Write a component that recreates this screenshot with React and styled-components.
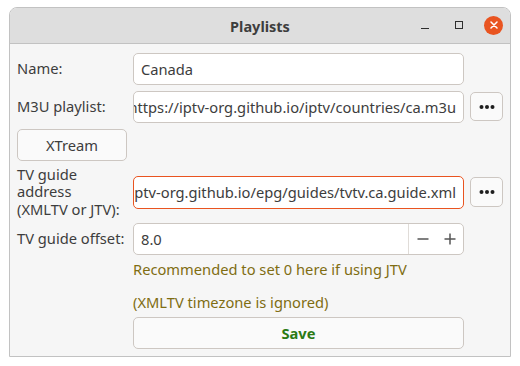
import React from 'react';
import styled, { createGlobalStyle } from 'styled-components';

const COLORS = {
  text: '#3d3d3d',
  border: '#cdc7c2',
  windowBorder: '#c2c2c2',
  titlebar: '#dedede',
  surface: '#f6f6f6',
  accent: '#e95420',
  hint: '#7f6d12',
  save: '#2b7a14',
};

const GlobalStyle = createGlobalStyle`
  body {
    margin: 0;
    background: #ffffff;
    font-family: "Noto Sans", "DejaVu Sans", sans-serif;
    color: ${COLORS.text};
  }
`;

const Window = styled.div`
  margin: 7px 0 0 9px;
  width: 502px;
  height: 350px;
  box-sizing: border-box;
  border: 1px solid ${COLORS.windowBorder};
  border-radius: 8px 8px 0 0;
  display: flex;
  flex-direction: column;
  background: ${COLORS.surface};
  overflow: hidden;
`;

const TitleBar = styled.header`
  height: 35px;
  flex-shrink: 0;
  background: ${COLORS.titlebar};
  border-bottom: 1px solid ${COLORS.windowBorder};
  display: grid;
  grid-template-columns: 1fr auto 1fr;
  align-items: center;
`;

const Title = styled.h1`
  grid-column: 2;
  margin: 0;
  font-size: 14.5px;
  font-weight: 700;
  color: ${COLORS.text};
`;

const Controls = styled.div`
  grid-column: 3;
  justify-self: end;
  display: flex;
  height: 100%;
`;

const ControlBox = styled.div`
  width: 34px;
  display: flex;
  align-items: center;
  justify-content: center;
`;

const MinimizeGlyph = styled.span`
  width: 8px;
  height: 1px;
  margin-top: 5px;
  background: #2e2e2e;
`;

const MaximizeGlyph = styled.span`
  width: 8px;
  height: 8px;
  box-sizing: border-box;
  border: 1px solid #2e2e2e;
  margin-top: -1px;
`;

const CloseGlyph = styled.span`
  width: 19px;
  height: 19px;
  margin-left: 1px;
  margin-top: -1px;
  border-radius: 50%;
  background: ${COLORS.accent};
  display: flex;
  align-items: center;
  justify-content: center;
`;

const Form = styled.div`
  padding: 9px 7px 7px;
  display: grid;
  grid-template-columns: 110px 331px 33px;
  grid-template-rows: 32px 32px 32px 50px 32px 50px 32px;
  column-gap: 6px;
  row-gap: 6px;
  font-size: 14.7px;
`;

const Label = styled.div`
  grid-column: 1;
  align-self: center;
  line-height: 17.5px;
  white-space: nowrap;
  color: ${COLORS.text};
`;

const Field = styled.div`
  grid-column: 2;
  box-sizing: border-box;
  display: flex;
  align-items: center;
  justify-content: ${(p) => (p.$scrolled ? 'flex-end' : 'flex-start')};
  padding: 0 7px 0 7px;
  background: #ffffff;
  border: 1px solid ${(p) => (p.$focused ? COLORS.accent : COLORS.border)};
  border-radius: 5px;
  overflow: hidden;
  white-space: nowrap;
  color: ${COLORS.text};
`;

const FieldText = styled.span`
  flex-shrink: 0;
`;

const Button = styled.button`
  box-sizing: border-box;
  border: 1px solid ${COLORS.border};
  border-radius: 5px;
  background: #fafafa;
  font-family: inherit;
  font-size: 14.7px;
  color: ${COLORS.text};
  padding: 0;
  display: flex;
  align-items: center;
  justify-content: center;
`;

const DotsButton = styled(Button)`
  grid-column: 3;
  margin: 1px 0 2px;
`;

const XtreamButton = styled(Button)`
  grid-column: 1;
`;

const SaveButton = styled(Button)`
  grid-column: 2;
  font-weight: 700;
  color: ${COLORS.save};
`;

const SpinField = styled.div`
  grid-column: 2;
  box-sizing: border-box;
  display: flex;
  background: #ffffff;
  border: 1px solid ${COLORS.border};
  border-radius: 5px;
  overflow: hidden;
  color: ${COLORS.text};
`;

const SpinValue = styled.div`
  flex: 1;
  display: flex;
  align-items: center;
  padding-left: 7px;
  border-right: 1px solid #e0dcd8;
`;

const SpinButton = styled.div`
  width: 27px;
  display: flex;
  align-items: center;
  justify-content: center;
`;

const Hint = styled.div`
  grid-column: 2;
  line-height: 16.5px;
  color: ${COLORS.hint};
`;

const Dots = () => (
  <svg width="16" height="6" viewBox="0 0 16 6">
    <circle cx="2.5" cy="3" r="2" fill="#1e1e1e" />
    <circle cx="8" cy="3" r="2" fill="#1e1e1e" />
    <circle cx="13.5" cy="3" r="2" fill="#1e1e1e" />
  </svg>
);

const Minus = () => (
  <svg width="12" height="12" viewBox="0 0 12 12">
    <rect x="0.5" y="5.25" width="11" height="1.5" fill="#555" />
  </svg>
);

const Plus = () => (
  <svg width="12" height="12" viewBox="0 0 12 12">
    <rect x="0.5" y="5.25" width="11" height="1.5" fill="#555" />
    <rect x="5.25" y="0.5" width="1.5" height="11" fill="#555" />
  </svg>
);

const Cross = () => (
  <svg width="8" height="8" viewBox="0 0 8 8">
    <path d="M1 1 L7 7 M7 1 L1 7" stroke="#ffffff" strokeWidth="1.5" strokeLinecap="round" />
  </svg>
);

export default function App() {
  return (
    <>
      <GlobalStyle />
      <Window>
        <TitleBar>
          <Title>Playlists</Title>
          <Controls>
            <ControlBox><MinimizeGlyph /></ControlBox>
            <ControlBox><MaximizeGlyph /></ControlBox>
            <ControlBox><CloseGlyph><Cross /></CloseGlyph></ControlBox>
          </Controls>
        </TitleBar>
        <Form>
          <Label>Name:</Label>
          <Field><FieldText>Canada</FieldText></Field>

          <Label>M3U playlist:</Label>
          <Field $scrolled>
            <FieldText>https://iptv-org.github.io/iptv/countries/ca.m3u</FieldText>
          </Field>
          <DotsButton><Dots /></DotsButton>

          <XtreamButton>XTream</XtreamButton>

          <Label>TV guide<br />address<br />(XMLTV or JTV):</Label>
          <Field $scrolled $focused style={{ height: 33, alignSelf: 'center' }}>
            <FieldText>https://iptv-org.github.io/epg/guides/tvtv.ca.guide.xml</FieldText>
          </Field>
          <DotsButton style={{ height: 30, alignSelf: 'center', margin: 0 }}><Dots /></DotsButton>

          <Label>TV guide offset:</Label>
          <SpinField>
            <SpinValue>8.0</SpinValue>
            <SpinButton><Minus /></SpinButton>
            <SpinButton><Plus /></SpinButton>
          </SpinField>

          <Hint>
            Recommended to set 0 here if using JTV
            <br />
            <br />
            (XMLTV timezone is ignored)
          </Hint>

          <SaveButton>Save</SaveButton>
        </Form>
      </Window>
    </>
  );
}
